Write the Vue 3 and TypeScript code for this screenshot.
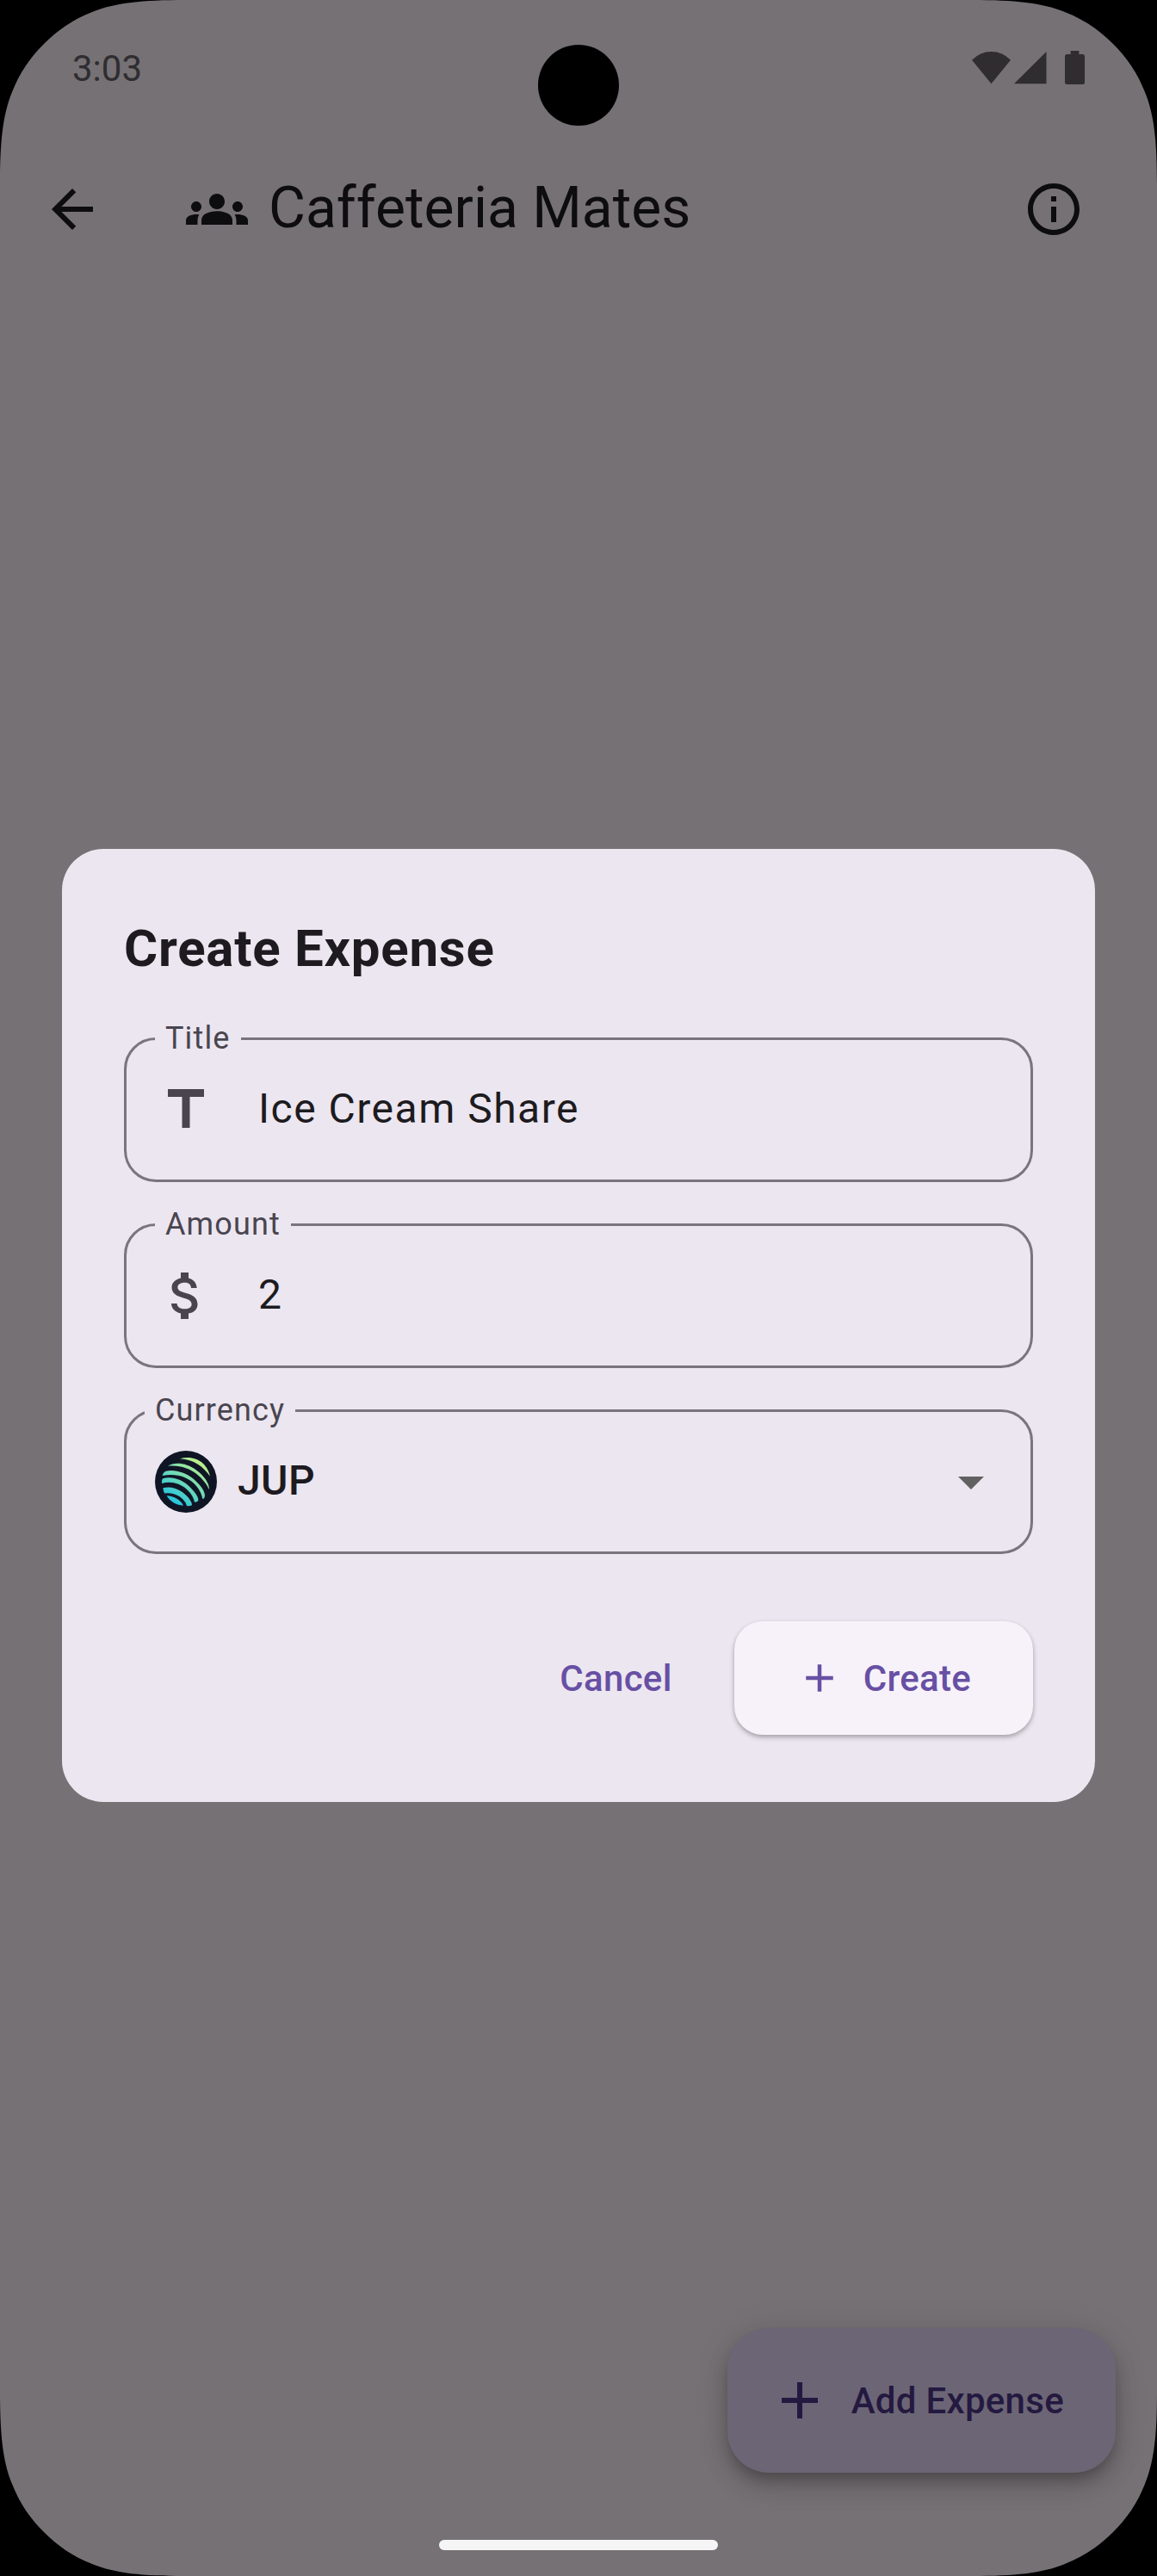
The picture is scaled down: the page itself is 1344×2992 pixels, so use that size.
<script setup lang="ts">
import { ref } from 'vue'

interface Field {
  id: string
  label: string
  value: string
  icon: string
}

const groupName = ref('Caffeteria Mates')
const clock = ref('3:03')

const fields = ref<Field[]>([
  { id: 'title', label: 'Title', value: 'Ice Cream Share', icon: 'M5 4v3h5.5v12h3V7H19V4z' },
  {
    id: 'amount',
    label: 'Amount',
    value: '2',
    icon: 'M11.8 10.9c-2.27-.59-3-1.2-3-2.15 0-1.09 1.01-1.85 2.7-1.85 1.78 0 2.44.85 2.5 2.1h2.21c-.07-1.72-1.12-3.3-3.21-3.81V3h-3v2.16c-1.94.42-3.5 1.68-3.5 3.61 0 2.31 1.91 3.46 4.7 4.13 2.5.6 3 1.48 3 2.41 0 .69-.49 1.79-2.7 1.79-2.06 0-2.87-.92-2.98-2.1h-2.2c.12 2.19 1.76 3.42 3.68 3.83V21h3v-2.15c1.95-.37 3.5-1.5 3.5-3.55 0-2.84-2.43-3.81-4.7-4.4z',
  },
])
const currency = ref('JUP')
const plus = 'M19 13h-6v6h-2v-6H5v-2h6V5h2v6h6v2z'
</script>

<template>
  <div class="device">
    <div class="screen">
      <header class="status-bar">
        <span class="clock">{{ clock }}</span>
        <svg class="status-icons" width="133" height="41" viewBox="1128 58 133 41">
          <path d="M1129 69.700Q1138.500 60 1151.500 60T1174 69.700L1151.500 97.300Z" />
          <path d="M1178 97.300L1215.500 60V97.300Z" />
          <path d="M1243.700 59h9.700v4h4.100q2.500 0 2.500 2.500v30q0 2.500-2.500 2.500h-18q-2.500 0-2.500-2.500v-30q0-2.500 2.500-2.500h4.200z" />
        </svg>
      </header>

      <div class="app-bar">
        <svg class="icon" viewBox="0 0 24 24"><path d="M20 11H7.830l5.590-5.590L12 4l-8 8 8 8 1.410-1.410L7.830 13H20v-2z" /></svg>
        <h1 class="app-title">
          <svg class="icon" viewBox="0 0 24 24">
            <path d="M12 12.750c1.630 0 3.070.39 4.240.9 1.080.48 1.760 1.560 1.760 2.730V18H6v-1.610c0-1.180.68-2.260 1.760-2.730 1.170-.52 2.610-.91 4.240-.91zM4 13c1.100 0 2-.9 2-2s-.9-2-2-2-2 .9-2 2 .9 2 2 2zm1.130 1.100c-.37-.06-.74-.1-1.130-.1-.99 0-1.930.21-2.780.58C.48 14.900 0 15.620 0 16.430V18h4.500v-1.610c0-.83.23-1.610.63-2.290zM20 13c1.100 0 2-.9 2-2s-.9-2-2-2-2 .9-2 2 .9 2 2 2zm4 3.430c0-.81-.48-1.530-1.220-1.850-.85-.37-1.790-.58-2.780-.58-.39 0-.76.04-1.130.1.4.68.63 1.460.63 2.290V18H24v-1.570zM12 6c1.660 0 3 1.340 3 3s-1.340 3-3 3-3-1.340-3-3 1.340-3 3-3z" />
          </svg>
          <span class="app-name">{{ groupName }}</span>
        </h1>
        <svg class="icon" viewBox="0 0 24 24"><path d="M11 7h2v2h-2V7zm0 4h2v6h-2v-6zm1-9C6.480 2 2 6.480 2 12s4.480 10 10 10 10-4.480 10-10S17.520 2 12 2zm0 18c-4.410 0-8-3.590-8-8s3.590-8 8-8 8 3.590 8 8-3.590 8-8 8z" /></svg>
      </div>

      <main class="body">
        <button class="fab" type="button">
          <svg class="icon" viewBox="0 0 24 24"><path :d="plus" /></svg>
          <span class="text">Add Expense</span>
        </button>
      </main>

      <div class="camera"></div>
      <div class="nav-handle"></div>

      <section class="dialog" role="dialog">
        <h2 class="dialog-title">Create Expense</h2>
        <div class="fields">
          <div v-for="field in fields" :key="field.id" class="field">
            <span class="label">{{ field.label }}</span>
            <svg class="icon prefix" viewBox="0 0 24 24"><path :d="field.icon" /></svg>
            <span class="value">{{ field.value }}</span>
          </div>
          <div class="field select">
            <span class="label">Currency</span>
            <svg class="icon token" viewBox="180 885 216 216">
              <defs>
                <linearGradient id="token-fill" gradientUnits="userSpaceOnUse" x1="225" y1="1080" x2="345" y2="915">
                  <stop offset="0" stop-color="#10bdeb" />
                  <stop offset="0.5" stop-color="#6cd9b8" />
                  <stop offset="1" stop-color="#c7f284" />
                </linearGradient>
              </defs>
              <circle cx="288" cy="993" r="108" fill="#101525" />
              <g fill="url(#token-fill)">
                <path d="M267 913C308 901 359 917 372 974C347 939 315 916 267 913Z" />
                <path d="M225 938C247 923 290 926 325 953C352 973 370 999 369 1020C352 984 306 931 225 938Z" />
                <path d="M206 972Q207 961 218 956C251 949 290 963 316 985C342 1008 358 1032 353 1047Q351 1053 346 1053C340 1013 293 955 206 972Z" />
                <path d="M204 999Q203 986 208 982C238 973 276 985 302 1012C322 1032 333 1049 331 1059Q326 1065 318 1064C311 1027 263 983 204 999Z" />
                <path d="M208 1015C229 1009 256 1015 275 1029C296 1044 310 1064 309 1075Q299 1079 291 1077C281 1045 244 1029 214 1034Q209 1026 208 1015Z" />
                <path d="M221 1042C246 1042 270 1058 279 1076C255 1075 233 1063 221 1042Z" />
              </g>
            </svg>
            <span class="value">{{ currency }}</span>
            <svg class="icon caret" viewBox="0 0 24 24"><path d="M7 10l5 5 5-5z" /></svg>
          </div>
        </div>
        <div class="actions">
          <button class="cancel" type="button"><span class="text">Cancel</span></button>
          <button class="create" type="button">
            <svg class="icon small" viewBox="0 0 24 24"><path :d="plus" /></svg>
            <span class="text">Create</span>
          </button>
        </div>
      </section>
    </div>
  </div>
</template>

<style>
body {
  margin: 0;
  background: #000;
}
</style>

<style scoped>
.device {
  width: 1344px;
  height: 2992px;
  background: #000;
  font-family: Roboto, sans-serif;
}

.screen {
  position: relative;
  display: flex;
  flex-direction: column;
  width: 100%;
  height: 100%;
  background: #767175;
  clip-path: path('M0 215C0 165 3 134 14 107C23 84 35 67 51 51C67 35 84 23 107 14C134 3 165 0 215 0H1129C1179 0 1210 3 1237 14C1260 23 1277 35 1293 51C1309 67 1321 84 1330 107C1341 134 1344 165 1344 215V2777C1344 2827 1341 2858 1330 2885C1321 2908 1309 2925 1293 2941C1277 2957 1260 2969 1237 2978C1210 2989 1179 2992 1129 2992H215C165 2992 134 2989 107 2978C84 2969 67 2957 51 2941C35 2925 23 2908 14 2885C3 2858 0 2827 0 2777Z');
}

.icon {
  display: block;
  flex: none;
  width: 72px;
  height: 72px;
  fill: currentColor;
}

.status-bar {
  display: flex;
  align-items: center;
  justify-content: space-between;
  box-sizing: border-box;
  height: 159px;
  padding: 0 83px 0 84px;
  color: #2f2d30;
}

.clock {
  font-size: 42px;
  line-height: 48px;
}

.status-icons {
  margin-bottom: 2px;
  fill: currentColor;
}

.app-bar {
  display: flex;
  align-items: center;
  box-sizing: border-box;
  height: 168px;
  padding: 0 84px 0 48px;
  color: #0d0c0f;
}

.app-title {
  display: flex;
  flex: 1;
  align-items: center;
  gap: 24px;
  margin: 0 0 0 96px;
  font-size: 66px;
  font-weight: 400;
  line-height: 84px;
}

.app-name {
  padding-bottom: 3px;
}

.body {
  display: flex;
  flex: 1;
  align-items: flex-end;
  justify-content: flex-end;
  padding: 0 48px 120px;
}

button {
  display: flex;
  align-items: center;
  box-sizing: border-box;
  border: 0;
  font-family: inherit;
  font-size: 42px;
  font-weight: 500;
  line-height: 60px;
  letter-spacing: 0.3px;
  white-space: nowrap;
}

.text {
  padding-top: 2px;
}

.fab {
  gap: 24px;
  height: 168px;
  padding: 0 60px 0 48px;
  border-radius: 48px;
  background: #6c6575;
  color: #241940;
  box-shadow: 0 10px 15px -3px rgba(0, 0, 0, 0.22), 0 18px 30px rgba(0, 0, 0, 0.13), 0 3px 40px rgba(0, 0, 0, 0.1);
}

.camera {
  position: absolute;
  top: 52px;
  left: 625px;
  width: 94px;
  height: 94px;
  border-radius: 50%;
  background: #000;
}

.nav-handle {
  position: absolute;
  bottom: 30px;
  left: 510px;
  width: 324px;
  height: 12px;
  border-radius: 6px;
  background: #f5f5f5;
}

.dialog {
  position: absolute;
  top: 986px;
  left: 72px;
  box-sizing: border-box;
  width: 1200px;
  height: 1107px;
  padding: 72px;
  border-radius: 48px;
  background: #ece6f0;
  color: #1d1b20;
}

.dialog-title {
  margin: 0 0 61px;
  padding-top: 2px;
  font-size: 60px;
  font-weight: 700;
  line-height: 84px;
  letter-spacing: 0.75px;
}

.fields {
  display: flex;
  flex-direction: column;
  gap: 48px;
}

.field {
  position: relative;
  display: flex;
  align-items: center;
  box-sizing: border-box;
  height: 168px;
  padding: 0 33px;
  border: 3px solid #79747e;
  border-radius: 37px;
}

/* Floating label interrupts the outline */
.label {
  position: absolute;
  top: -26px;
  left: 33px;
  padding: 0 12px;
  background: #ece6f0;
  color: #49454f;
  font-size: 36px;
  line-height: 48px;
  letter-spacing: 1.13px;
}

.select .label {
  left: 21px;
}

.prefix {
  color: #49454f;
}

.value {
  margin: 0 0 3px 48px;
  font-size: 48px;
  line-height: 72px;
  letter-spacing: 1.5px;
}

.select .value {
  flex: 1;
  margin-left: 24px;
  font-weight: 500;
  letter-spacing: 0.45px;
}

.caret {
  color: #616161;
}

.actions {
  display: flex;
  justify-content: flex-end;
  gap: 24px;
  margin-top: 78px;
}

.cancel {
  height: 132px;
  padding: 0 48px;
  background: transparent;
  color: #6750a4;
}

.create {
  gap: 24px;
  height: 132px;
  padding: 0 72px;
  border-radius: 33px;
  background: #f7f2fa;
  color: #6750a4;
  box-shadow: 0 3px 6px rgba(0, 0, 0, 0.2), 0 2px 4px rgba(0, 0, 0, 0.14);
}

.small {
  width: 54px;
  height: 54px;
}
</style>
